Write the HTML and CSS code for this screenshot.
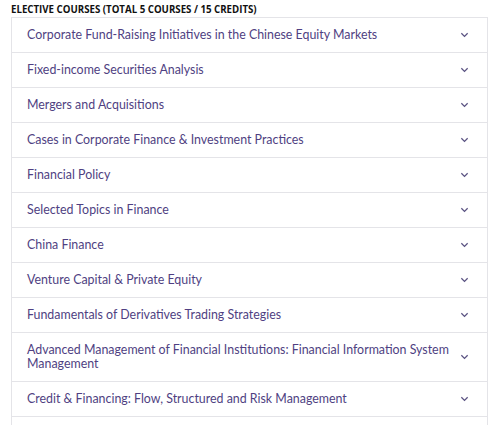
FILE: index.html
```html
<!DOCTYPE html>
<html>
<head>
<meta charset="utf-8">
<link rel="stylesheet" href="styles.css">
</head>
<body>
<div class="wrap">
  <h3 class="title">ELECTIVE COURSES (TOTAL 5 COURSES / 15 CREDITS)</h3>
  <ul class="list">
    <li class="row"><span class="name">Corporate Fund-Raising Initiatives in the Chinese Equity Markets</span><svg class="chev" viewBox="0 0 10 6"><path d="M1.5 1l3.5 3.5 3.5-3.5"/></svg></li>
    <li class="row"><span class="name">Fixed-income Securities Analysis</span><svg class="chev" viewBox="0 0 10 6"><path d="M1.5 1l3.5 3.5 3.5-3.5"/></svg></li>
    <li class="row"><span class="name">Mergers and Acquisitions</span><svg class="chev" viewBox="0 0 10 6"><path d="M1.5 1l3.5 3.5 3.5-3.5"/></svg></li>
    <li class="row"><span class="name">Cases in Corporate Finance &amp; Investment Practices</span><svg class="chev" viewBox="0 0 10 6"><path d="M1.5 1l3.5 3.5 3.5-3.5"/></svg></li>
    <li class="row"><span class="name">Financial Policy</span><svg class="chev" viewBox="0 0 10 6"><path d="M1.5 1l3.5 3.5 3.5-3.5"/></svg></li>
    <li class="row"><span class="name">Selected Topics in Finance</span><svg class="chev" viewBox="0 0 10 6"><path d="M1.5 1l3.5 3.5 3.5-3.5"/></svg></li>
    <li class="row"><span class="name">China Finance</span><svg class="chev" viewBox="0 0 10 6"><path d="M1.5 1l3.5 3.5 3.5-3.5"/></svg></li>
    <li class="row"><span class="name">Venture Capital &amp; Private Equity</span><svg class="chev" viewBox="0 0 10 6"><path d="M1.5 1l3.5 3.5 3.5-3.5"/></svg></li>
    <li class="row"><span class="name">Fundamentals of Derivatives Trading Strategies</span><svg class="chev" viewBox="0 0 10 6"><path d="M1.5 1l3.5 3.5 3.5-3.5"/></svg></li>
    <li class="row tall"><span class="name">Advanced Management of Financial Institutions: Financial Information System Management</span><svg class="chev" viewBox="0 0 10 6"><path d="M1.5 1l3.5 3.5 3.5-3.5"/></svg></li>
    <li class="row"><span class="name">Credit &amp; Financing: Flow, Structured and Risk Management</span><svg class="chev" viewBox="0 0 10 6"><path d="M1.5 1l3.5 3.5 3.5-3.5"/></svg></li>
    <li class="filler"></li>
  </ul>
</div>
</body>
</html>
```
FILE: styles.css
```css
html, body {
  margin: 0;
  padding: 0;
  background: #ffffff;
}
body {
  font-family: "Lato", "Open Sans", "Liberation Sans", sans-serif;
  overflow: hidden;
}
.wrap {
  padding: 3px 11px 0 11px;
  width: 477px;
}
.title {
  margin: 0;
  font-family: "Open Sans", "Liberation Sans", sans-serif;
  font-size: 9.7px;
  font-weight: 700;
  color: #111111;
  line-height: 13px;
}
.list {
  list-style: none;
  margin: 1px 0 0 0;
  padding: 0;
  border-left: 1px solid #e4e4e8;
  border-right: 1px solid #e4e4e8;
  border-top: 1px solid #e4e4e8;
}
.row {
  display: flex;
  align-items: center;
  min-height: 35px;
  padding: 0 18px 0 15px;
  border-bottom: 1px solid #e4e4e8;
  box-sizing: border-box;
}
.row.tall {
  min-height: 49px;
  padding-top: 4px;
  padding-bottom: 4px;
}
.filler {
  height: 8px;
}
.name {
  flex: 1;
  font-size: 12.4px;
  line-height: 14px;
  color: #4f3f82;
}
.chev {
  width: 9px;
  height: 6px;
  flex: none;
  margin-left: 4px;
  fill: none;
  stroke: #5a5282;
  stroke-width: 1.4;
}
```
